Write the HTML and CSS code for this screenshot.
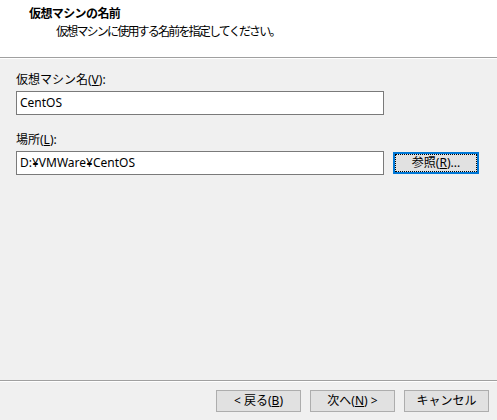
FILE: index.html
```html
<!DOCTYPE html>
<html lang="ja">
<head>
<meta charset="utf-8">
<title>新しい仮想マシン ウィザード</title>
<link rel="stylesheet" href="styles.css">
</head>
<body>
<div class="dialog">
  <header class="head">
    <div class="title">仮想マシンの名前</div>
    <div class="subtitle">仮想マシンに使用する名前を指定してください。</div>
  </header>
  <main class="body">
    <label class="label">仮想マシン名(<u>V</u>):</label>
    <div class="input">CentOS</div>
    <label class="label second">場所(<u>L</u>):</label>
    <div class="row">
      <div class="input">D:¥VMWare¥CentOS</div>
      <button class="btn focus">参照(<u>R</u>)...</button>
    </div>
  </main>
  <footer class="foot">
    <button class="btn">&lt; 戻る(<u>B</u>)</button>
    <button class="btn">次へ(<u>N</u>) &gt;</button>
    <button class="btn">キャンセル</button>
  </footer>
</div>
</body>
</html>
```
FILE: styles.css
```css
* { box-sizing: border-box; }
html, body { margin: 0; padding: 0; }
body {
  background: #f0f0f0;
  font-family: "Noto Sans", "Noto Sans CJK JP", sans-serif;
  font-size: 12px;
  color: #000;
}
.dialog {
  width: 497px;
  height: 420px;
  display: flex;
  flex-direction: column;
}
.head {
  height: 58px;
  background: #fff;
  border-bottom: 1px solid #a0a0a0;
  box-shadow: 0 1px 0 #fff;
  margin-bottom: 1px;
  padding: 5px 0 0 29px;
  flex: none;
}
.title {
  font-weight: bold;
  line-height: 17px;
  letter-spacing: -0.6px;
}
.subtitle {
  padding-left: 27px;
  margin-top: 1px;
  line-height: 17px;
  letter-spacing: -1.8px;
}
.body {
  flex: 1;
  padding: 12px 16px 0 16px;
  display: flex;
  flex-direction: column;
}
.label {
  display: block;
  line-height: 17px;
  margin-bottom: 3px;
}
.label.second { margin-top: 16px; }
.input {
  width: 368px;
  height: 24px;
  background: #fff;
  border: 1px solid #7a7a7a;
  padding: 0 3px;
  line-height: 22px;
}
.row {
  display: flex;
  align-items: flex-start;
  gap: 9px;
}
.btn {
  width: 86px;
  height: 22px;
  margin: 0;
  padding: 0;
  background: #e1e1e1;
  border: 1px solid #adadad;
  font-family: inherit;
  font-size: 12px;
  line-height: 18px;
  color: #000;
}
.row .btn { margin-top: 1px; }
.btn.focus {
  border: 2px solid #0078d7;
  outline: 1px dotted #000;
  outline-offset: -3px;
}
.foot {
  height: 40px;
  flex: none;
  border-top: 1px solid #a0a0a0;
  box-shadow: inset 0 1px 0 #fff;
  padding: 9px 8px 0 0;
  display: flex;
  justify-content: flex-end;
  align-items: flex-start;
  gap: 9px;
}
.foot .btn { width: 85px; }
```
